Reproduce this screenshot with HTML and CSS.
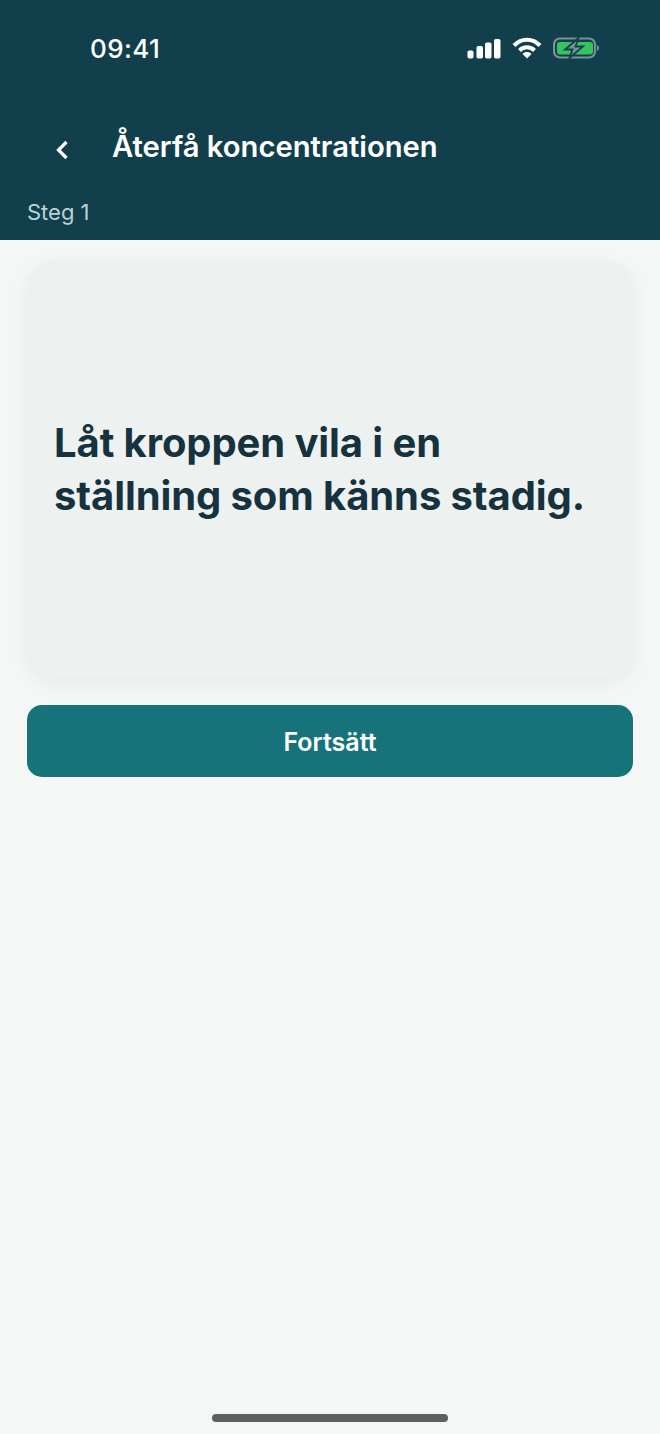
FILE: index.html
```html
<!DOCTYPE html>
<html lang="sv">
<head>
  <meta charset="UTF-8" />
  <meta name="viewport" content="width=device-width, initial-scale=1" />
  <title>Återfå koncentrationen</title>
  <link rel="stylesheet" href="styles.css">
</head>
<body>
  <header class="top">
    <div class="status">
      <span class="time">09:41</span>
      <div class="status-icons">
        <svg class="signal" width="34" height="21" viewBox="0 0 34 21">
          <rect x="0.500" y="12.500" width="6" height="8" rx="1.800" fill="#fff"/>
          <rect x="9.500" y="8" width="6.500" height="12.500" rx="1.800" fill="#fff"/>
          <rect x="18" y="4.500" width="6.500" height="16" rx="1.800" fill="#fff"/>
          <rect x="27" y="1" width="6.500" height="19.500" rx="1.800" fill="#fff"/>
        </svg>
        <svg class="wifi" width="30" height="22" viewBox="0 0 30 22" fill="none">
          <path d="M2 8.500C9.500 0.800 20.500 0.800 28 8.500" stroke="#fff" stroke-width="4.200"/>
          <path d="M7.500 13.500C11.500 9.300 18.500 9.300 22.500 13.500" stroke="#fff" stroke-width="4"/>
          <path d="M10.500 17C13 14.400 17 14.400 19.500 17L15 21.500Z" fill="#fff"/>
        </svg>
        <svg class="battery" width="46" height="22" viewBox="0 0 46 22" fill="none">
          <rect x="1" y="1.500" width="41" height="19" rx="6" stroke="#7c9197" stroke-width="2.200"/>
          <rect x="4" y="5" width="36" height="12.500" rx="3" fill="#36c45f"/>
          <path d="M44 8v6c1.300-.5 2-1.700 2-3S45.300 8.500 44 8z" fill="#7c9197"/>
          <path d="M25.500 1 12 12.500H19.500L16.500 21 30 9.500H22.500Z" fill="#7c9197" stroke="#123f4c" stroke-width="1.800"/>
        </svg>
      </div>
    </div>
    <div class="title-row">
      <svg class="back" width="14" height="22" viewBox="0 0 14 22" fill="none">
        <path d="M11.500 3 3.500 11 11.500 19" stroke="#fff" stroke-width="3.200"/>
      </svg>
      <h1>Återfå koncentrationen</h1>
    </div>
    <p class="step">Steg 1</p>
  </header>

  <main class="content">
    <section class="card">
      <h2>Låt kroppen vila i en ställning som känns stadig.</h2>
    </section>
    <button class="next">Fortsätt</button>
  </main>

  <div class="home-bar"></div>
</body>
</html>
```

FILE: styles.css
```css
html, body {
  height: 100%;
}
body {
  margin: 0;
  font-family: 'Inter', 'Liberation Sans', sans-serif;
  background: #f4f7f6;
  color: #17323f;
  display: flex;
  flex-direction: column;
  overflow: hidden;
}
.top {
  background: #123f4c;
  color: #fff;
  height: 240px;
  box-sizing: border-box;
  flex-shrink: 0;
}
.status {
  display: flex;
  justify-content: space-between;
  align-items: center;
  height: 30px;
  padding: 33px 61px 0 90px;
}
.time {
  font-size: 26px;
  font-weight: 500;
  letter-spacing: 0.4px;
}
.status-icons {
  display: flex;
  align-items: center;
  gap: 11px;
}
.title-row {
  display: flex;
  align-items: center;
  margin-top: 51px;
  padding-left: 55px;
  height: 64px;
}
.title-row h1 {
  margin: 0 0 0 43px;
  font-size: 29.2px;
  font-weight: 600;
}
.back {
  margin-top: 7px;
}
.step {
  margin: 0;
  padding: 20px 27px 0;
  font-size: 22px;
  line-height: 28px;
  color: #bcd3d6;
}
.content {
  flex: 1;
  padding: 20px 27px 0;
}
.card {
  height: 418px;
  box-sizing: border-box;
  display: flex;
  align-items: center;
  padding: 0 27px;
  background: #edf2f0;
  border-radius: 27px;
  box-shadow: 0 6px 20px rgb(0 0 0 / 0.05);
}
.card h2 {
  margin: 0;
  font-size: 40px;
  font-weight: 700;
  line-height: 53px;
  letter-spacing: -0.1px;
  color: #17323f;
}
.next {
  display: block;
  width: 100%;
  height: 72px;
  margin-top: 27px;
  padding: 2px 0 0;
  border: 0;
  border-radius: 15px;
  background: #16737a;
  color: #fff;
  font: 600 25px 'Inter', 'Liberation Sans', sans-serif;
}
.home-bar {
  position: absolute;
  left: 212px;
  bottom: 12px;
  width: 236px;
  height: 8px;
  border-radius: 4px;
  background: #5e5f5f;
}
```
